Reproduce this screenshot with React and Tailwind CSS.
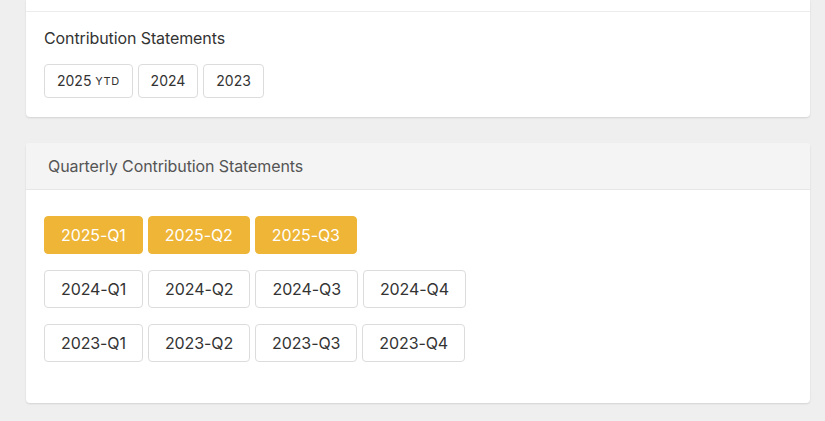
import React from "react";

const font = { fontFamily: "Inter, 'Noto Sans', 'Liberation Sans', sans-serif" };

function SmallBtn({ children }) {
  return (
    <button className="h-[34px] px-[12px] rounded-[4px] border border-[#dcdcdc] bg-white text-[14px] text-[#333] leading-none flex items-center">
      {children}
    </button>
  );
}

function QBtn({ label, active }) {
  return (
    <button
      className={
        active
          ? "h-[38px] px-[16px] rounded-[4px] border border-[#eeb537] bg-[#eeb537] text-white text-[16px] tracking-[-0.1px] leading-none flex items-center"
          : "h-[38px] px-[16px] rounded-[4px] border border-[#dcdcdc] bg-white text-[#333] text-[16px] tracking-[-0.1px] leading-none flex items-center"
      }
    >
      {label}
    </button>
  );
}

export default function App() {
  const rows = [
    ["2025-Q1", "2025-Q2", "2025-Q3"],
    ["2024-Q1", "2024-Q2", "2024-Q3", "2024-Q4"],
    ["2023-Q1", "2023-Q2", "2023-Q3", "2023-Q4"],
  ];
  return (
    <div className="min-h-screen bg-[#efefef] pl-[26px] pr-[15px] pb-[18px]" style={font}>
      <div className="bg-white rounded-b-[4px] shadow-[0_1px_2px_rgba(0,0,0,0.12)]">
        <div className="h-[12px] border-b border-[#ececec]" />
        <div className="pl-[18px] pt-[14px] pb-[19px]">
          <div className="text-[16px] leading-[24px] text-[#333] tracking-[-0.1px]">Contribution Statements</div>
          <div className="flex gap-[5px] mt-[14px]">
            <SmallBtn>
              2025&nbsp;<span className="text-[11px] tracking-[0.5px]">YTD</span>
            </SmallBtn>
            <SmallBtn>2024</SmallBtn>
            <SmallBtn>2023</SmallBtn>
          </div>
        </div>
      </div>

      <div className="mt-[26px] bg-white rounded-[4px] shadow-[0_1px_2px_rgba(0,0,0,0.12)] overflow-hidden">
        <div className="h-[47px] bg-[#f4f4f4] border-b border-[#e6e6e6] pl-[22px] flex items-center text-[16px] text-[#555] tracking-[-0.1px]">
          Quarterly Contribution Statements
        </div>
        <div className="pl-[18px] pt-[26px] pb-[41px] flex flex-col gap-[16px]">
          {rows.map((r, i) => (
            <div key={i} className="flex gap-[5px]">
              {r.map((l) => (
                <QBtn key={l} label={l} active={i === 0} />
              ))}
            </div>
          ))}
        </div>
      </div>
    </div>
  );
}
